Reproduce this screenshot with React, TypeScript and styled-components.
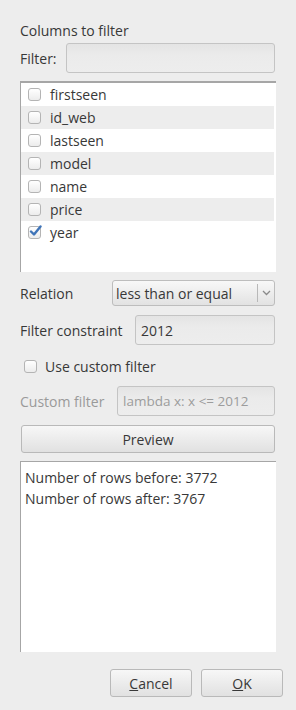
import React from 'react';
import styled, { createGlobalStyle } from 'styled-components';

const GlobalStyle = createGlobalStyle`
  html, body {
    margin: 0;
    padding: 0;
    background: #ededed;
  }
  body {
    font-family: 'Open Sans', 'DejaVu Sans', sans-serif;
    font-size: 14px;
    color: #383838;
  }
`;

const Dialog = styled.div`
  width: 296px;
  height: 710px;
  box-sizing: border-box;
  padding: 22px 20px 0 20px;
  display: flex;
  flex-direction: column;
`;

const Title = styled.div`
  height: 18px;
  line-height: 18px;
`;

const FormRow = styled.div<{ top: number; labelWidth: number }>`
  display: flex;
  align-items: center;
  margin-top: ${({ top }) => top}px;
  & > :first-child {
    width: ${({ labelWidth }) => labelWidth}px;
    flex: none;
  }
`;

const Label = styled.span<{ disabled?: boolean }>`
  color: ${({ disabled }) => (disabled ? '#9a9a9a' : '#383838')};
  white-space: nowrap;
`;

const TextInput = styled.div<{ height?: number; muted?: boolean }>`
  flex: 1;
  margin-right: 1px;
  height: ${({ height }) => height ?? 30}px;
  box-sizing: border-box;
  border: 1px solid #c4c4c4;
  border-radius: 3px;
  background: linear-gradient(#e4e4e4, #ebebeb 40%, #ededed);
  display: flex;
  align-items: center;
  padding-left: 5px;
  color: ${({ muted }) => (muted ? '#9c9c9c' : '#383838')};
  font-size: ${({ muted }) => (muted ? 13.5 : 14)}px;
`;

const ListBox = styled.div`
  margin-top: 8px;
  height: 191px;
  box-sizing: border-box;
  background: #fff;
  border-top: 2px solid #a6a6a6;
  border-left: 1px solid #a6a6a6;
`;

const ListRow = styled.div<{ alt: boolean }>`
  height: 23px;
  display: flex;
  align-items: center;
  background: ${({ alt }) => (alt ? '#ededed' : '#fff')};
  margin-right: 2px;
  padding-left: 7px;
  line-height: 22px;
`;

const Box = styled.span`
  position: relative;
  width: 11px;
  height: 11px;
  flex: none;
  border: 1px solid #b4b4b4;
  border-radius: 3px;
  background: linear-gradient(#ffffff, #ececec);
  margin-right: 9px;
`;

const Tick = styled.svg`
  position: absolute;
  left: 0px;
  top: -2px;
  width: 13px;
  height: 12px;
`;

const Combo = styled.div`
  flex: 1;
  margin-right: 1px;
  height: 26px;
  box-sizing: border-box;
  border: 1px solid #bdbdbd;
  border-radius: 3px;
  background: linear-gradient(#f8f8f8, #e2e2e2);
  display: flex;
  align-items: center;
  padding-left: 3px;
`;

const ComboText = styled.span`
  flex: 1;
`;

const ComboArrow = styled.span`
  width: 16px;
  height: 18px;
  border-left: 1px solid #b8b8b8;
  display: flex;
  align-items: center;
  justify-content: center;
`;

const CheckRow = styled.div`
  display: flex;
  align-items: center;
  margin-top: 12px;
  height: 18px;
  padding-left: 4px;
  & > span:first-child {
    margin-right: 8px;
  }
`;

const Button = styled.div<{ width?: number }>`
  height: 28px;
  box-sizing: border-box;
  ${({ width }) => (width ? `width: ${width}px;` : '')}
  border: 1px solid #b9b9b9;
  border-radius: 3px;
  background: linear-gradient(#f7f7f7, #e1e1e1);
  display: flex;
  align-items: center;
  justify-content: center;
  color: #383838;
`;

const PreviewButton = styled(Button)`
  margin: 9px 1px 0 1px;
`;

const Output = styled.div`
  margin-top: 8px;
  height: 191px;
  box-sizing: border-box;
  background: #fff;
  border-top: 1px solid #a6a6a6;
  border-left: 1px solid #a6a6a6;
  padding: 5px 4px;
  line-height: 21px;
`;

const Footer = styled.div`
  margin-top: 17px;
  margin-right: -7px;
  display: flex;
  justify-content: flex-end;
  gap: 9px;
`;

const Mnemonic = styled.span`
  text-decoration: underline;
`;

const columns = ['firstseen', 'id_web', 'lastseen', 'model', 'name', 'price', 'year'];

export default function App() {
  return (
    <>
      <GlobalStyle />
      <Dialog>
        <Title>Columns to filter</Title>
        <FormRow top={3} labelWidth={46}>
          <Label>Filter:</Label>
          <TextInput />
        </FormRow>
        <ListBox>
          {columns.map((c, i) => (
            <ListRow key={c} alt={i % 2 === 1}>
              <Box>
                {c === 'year' && (
                  <Tick viewBox="0 0 13 12">
                    <path
                      d="M2 6.5 L5 9.5 L11.5 1.5"
                      fill="none"
                      stroke="#3f74b8"
                      strokeWidth="2.4"
                      strokeLinecap="round"
                      strokeLinejoin="round"
                    />
                  </Tick>
                )}
              </Box>
              {c}
            </ListRow>
          ))}
        </ListBox>
        <FormRow top={8} labelWidth={92}>
          <Label>Relation</Label>
          <Combo>
            <ComboText>less than or equal</ComboText>
            <ComboArrow>
              <svg width="9" height="6" viewBox="0 0 9 6">
                <path d="M1 1 L4.5 4.5 L8 1" fill="none" stroke="#8a8a8a" strokeWidth="1.3" />
              </svg>
            </ComboArrow>
          </Combo>
        </FormRow>
        <FormRow top={9} labelWidth={115}>
          <Label>Filter constraint</Label>
          <TextInput>2012</TextInput>
        </FormRow>
        <CheckRow>
          <Box />
          <Label>Use custom filter</Label>
        </CheckRow>
        <FormRow top={11} labelWidth={97}>
          <Label disabled>Custom filter</Label>
          <TextInput muted>lambda x: x &lt;= 2012</TextInput>
        </FormRow>
        <PreviewButton>Preview</PreviewButton>
        <Output>
          <div>Number of rows before: 3772</div>
          <div>Number of rows after: 3767</div>
        </Output>
        <Footer>
          <Button width={82}>
            <Mnemonic>C</Mnemonic>ancel
          </Button>
          <Button width={82}>
            <Mnemonic>O</Mnemonic>K
          </Button>
        </Footer>
      </Dialog>
    </>
  );
}
